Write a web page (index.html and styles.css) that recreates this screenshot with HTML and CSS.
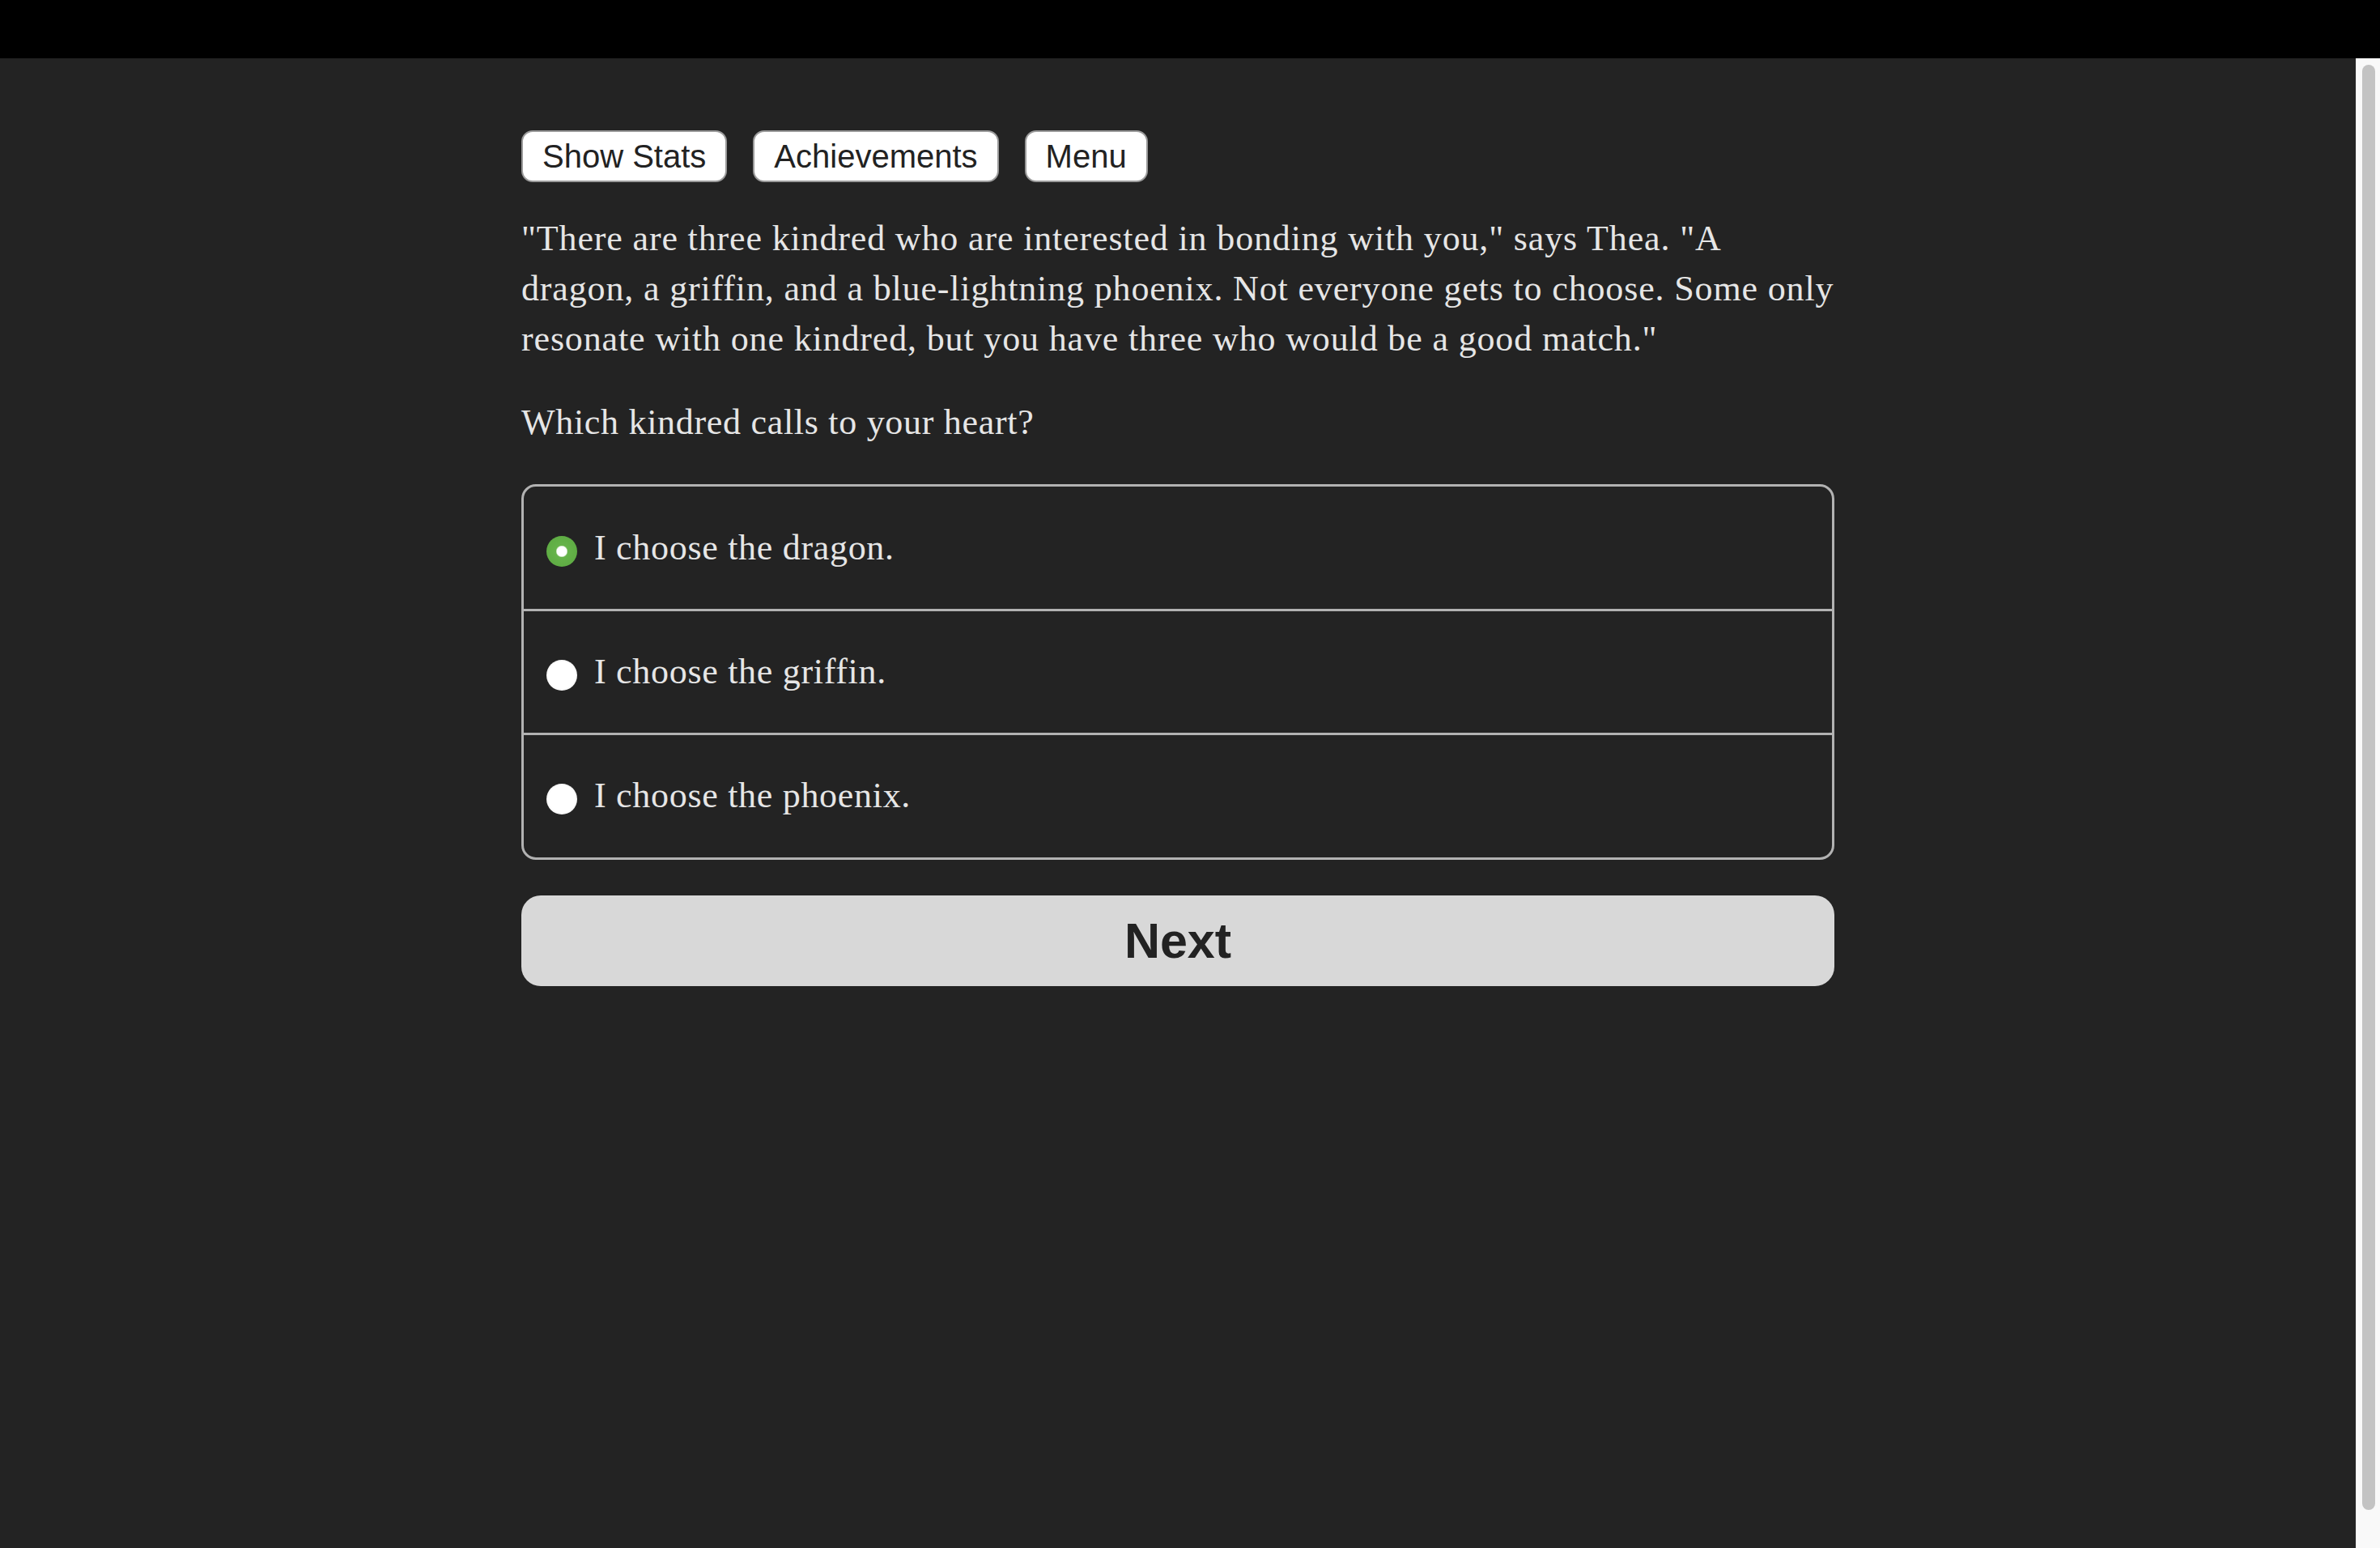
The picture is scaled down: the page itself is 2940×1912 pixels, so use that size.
FILE: index.html
```html
<!DOCTYPE html>
<html lang="en">
<head>
<meta charset="utf-8">
<title>Which kindred calls to your heart?</title>
<link rel="stylesheet" href="styles.css">
</head>
<body>
<div class="topbar"></div>
<div class="viewport">
  <main class="page">
    <nav class="toolbar">
      <button class="tool-btn">Show Stats</button>
      <button class="tool-btn">Achievements</button>
      <button class="tool-btn">Menu</button>
    </nav>
    <p class="story">"There are three kindred who are interested in bonding with you," says Thea. "A dragon, a griffin, and a blue-lightning phoenix. Not everyone gets to choose. Some only resonate with one kindred, but you have three who would be a good match."</p>
    <p class="story question">Which kindred calls to your heart?</p>
    <form class="choices">
      <label class="choice"><span class="radio checked"></span><span class="choice-text">I choose the dragon.</span></label>
      <label class="choice"><span class="radio"></span><span class="choice-text">I choose the griffin.</span></label>
      <label class="choice"><span class="radio"></span><span class="choice-text">I choose the phoenix.</span></label>
    </form>
    <button class="next-btn">Next</button>
  </main>
  <div class="scrollbar"><div class="thumb"></div></div>
</div>
</body>
</html>
```
FILE: styles.css
```css
html, body {
  margin: 0;
  padding: 0;
  height: 100%;
  background: #232323;
  overflow: hidden;
}
body {
  display: flex;
  flex-direction: column;
  font-family: "Liberation Serif", "Times New Roman", serif;
}
.topbar {
  height: 72px;
  background: #000;
  flex: none;
}
.viewport {
  flex: 1;
  display: flex;
  min-height: 0;
}
.page {
  flex: 1;
  display: flex;
  flex-direction: column;
  align-items: center;
}
.page > * {
  width: 1622px;
  box-sizing: border-box;
}
.toolbar {
  display: flex;
  gap: 32px;
  margin-top: 89px;
}
.tool-btn {
  font-family: "Liberation Sans", Arial, sans-serif;
  font-size: 40px;
  line-height: 46px;
  color: #222;
  background: #fff;
  border: 2px solid #9a9a9a;
  border-radius: 14px;
  padding: 7px 24px;
  margin: 0;
}
.story {
  margin: 39px 0 0;
  font-size: 44px;
  letter-spacing: 0.85px;
  line-height: 62px;
  color: #e6e6e6;
}
.story.question {
  margin-top: 41px;
  letter-spacing: 0.7px;
}
.choices {
  margin: 45px 0 0;
  border: 3px solid #b2b2b2;
  border-radius: 18px;
  display: flex;
  flex-direction: column;
}
.choice {
  display: flex;
  align-items: center;
  padding: 44px 28px;
  border-top: 3px solid #b2b2b2;
  font-size: 44px;
  letter-spacing: 0.7px;
  line-height: 62px;
  color: #e6e6e6;
}
.choice:first-child {
  border-top: none;
  padding-top: 45px;
}
.choice:last-child {
  padding-bottom: 45px;
}
.radio {
  width: 38px;
  height: 38px;
  border-radius: 50%;
  flex: none;
  margin-right: 21px;
  margin-top: 8px;
  background: radial-gradient(circle, #ffffff 0 60%, #eeeeee 80%, #cccccc 100%);
}
.radio.checked {
  background: radial-gradient(circle, #ffffff 0 6px, #66b34a 7.5px, #5aa840 100%);
}
.next-btn {
  margin: 44px 0 0;
  height: 112px;
  background: #d8d8d8;
  border: none;
  border-radius: 24px;
  font-family: "Liberation Sans", Arial, sans-serif;
  font-weight: bold;
  font-size: 61px;
  color: #222;
}
.scrollbar {
  width: 30px;
  flex: none;
  background: #f9f9f9;
  border-left: 1px solid #ececec;
  box-sizing: border-box;
  padding: 8px 6px 0 7px;
}
.thumb {
  height: 1785px;
  background: #c3c3c3;
  border-radius: 8px;
}
```
